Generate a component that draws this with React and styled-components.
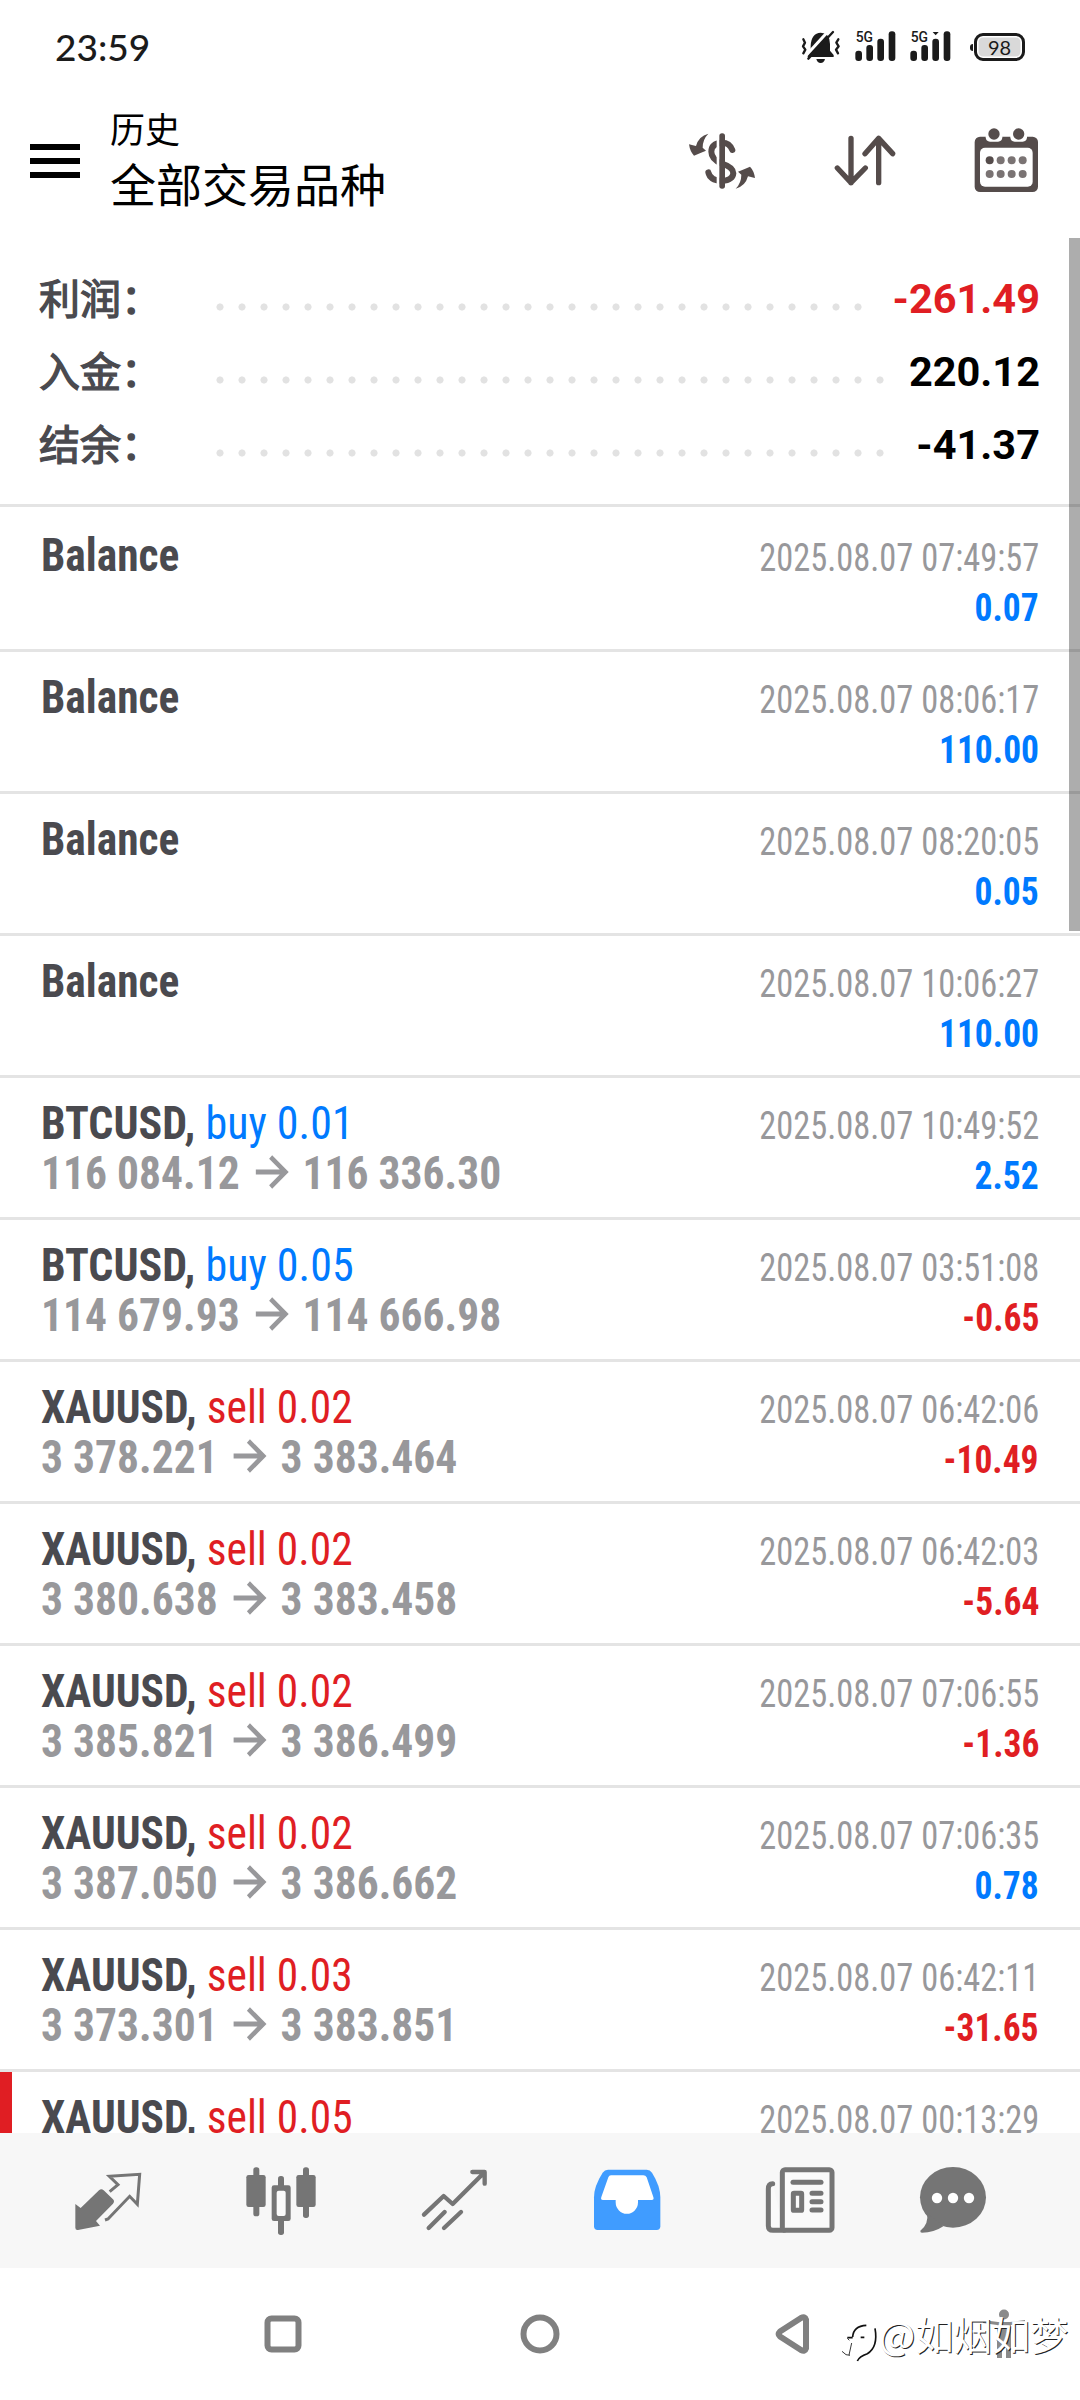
import styled, { createGlobalStyle } from 'styled-components';

const colors = {
  text: '#4a4a4f',
  grey: '#98989b',
  blue: '#007aff',
  red: '#e01e23',
  line: '#e4e4e4',
  header: '#554c4b',
  tab: '#757575',
};

const GlobalStyle = createGlobalStyle`
  * {
    box-sizing: border-box;
  }
  body {
    margin: 0;
    background: #fff;
    font-family: Roboto, 'Noto Sans CJK SC', sans-serif;
  }
  svg {
    display: block;
    flex: none;
    overflow: visible;
  }
`;

const Screen = styled.div`
  position: relative;
  display: flex;
  flex-direction: column;
  width: 1080px;
  height: 2400px;
  overflow: hidden;
  background: #fff;
`;

const StatusBar = styled.div`
  display: flex;
  align-items: center;
  justify-content: space-between;
  height: 84px;
  padding: 8px 55px 0 55px;
`;

const Clock = styled.span`
  font-family: Lato, sans-serif;
  font-size: 37px;
  font-weight: 500;
  color: #1b1b1b;
`;

const StatusIcons = styled.div`
  display: flex;
  align-items: center;
  gap: 14px;
  padding-top: 1px;
`;

const Battery = styled.div`
  position: relative;
  width: 51px;
  height: 28px;
  margin-left: 9px;
  border: 3px solid #1b1b1b;
  border-radius: 9px;
  box-shadow: inset 0 0 0 1.5px #fff;
  background: #d9d9d9;
  color: #1b1b1b;
  font-family: Lato, sans-serif;
  font-size: 20px;
  line-height: 22px;
  text-align: center;

  &::before {
    content: '';
    position: absolute;
    left: -7px;
    top: 8px;
    width: 3px;
    height: 7px;
    border-radius: 3px 0 0 3px;
    background: #1b1b1b;
  }
`;

const Header = styled.header`
  display: flex;
  align-items: center;
  height: 154px;
  padding: 0 41px 0 30px;
`;

const MenuButton = styled.div`
  display: flex;
  flex-direction: column;
  gap: 8px;
  width: 50px;

  span {
    height: 6px;
    background: #000;
  }
`;

const Titles = styled.div`
  flex: 1;
  margin: 0 0 12px 30px;
  color: #000;
  line-height: 54px;
  font-family: 'Noto Sans CJK SC', sans-serif;
`;

const Subtitle = styled.div`
  font-size: 35px;
`;

const Title = styled.div`
  font-size: 46px;
`;

const Actions = styled.div`
  display: flex;
  align-items: center;
  gap: 78px;
`;

const Content = styled.main`
  flex: 1;
  min-height: 0;
  overflow: hidden;
`;

const Summary = styled.section`
  height: 269px;
  padding: 23px 40px 0 39px;
  border-bottom: 3px solid ${colors.line};
`;

const SummaryRow = styled.div`
  display: flex;
  height: 73px;
`;

const SummaryLabel = styled.span`
  width: 170px;
  color: ${colors.text};
  font-family: 'Noto Sans CJK SC', sans-serif;
  font-size: 41px;
  line-height: 70px;
  -webkit-text-stroke: 1.3px ${colors.text};
`;

const Leader = styled.span`
  width: ${(p) => p.$dots * 22}px;
  height: 8px;
  margin-top: 42px;
  background: radial-gradient(circle, #e2e2e2 3.2px, transparent 3.9px) 0 0 / 22px 8px repeat-x;
`;

const SummaryValue = styled.span`
  margin-left: auto;
  color: ${(p) => (p.$negative ? colors.red : '#000')};
  font-size: 41.5px;
  font-weight: 700;
  line-height: 75px;
`;

const Deal = styled.article`
  position: relative;
  height: ${(p) => (p.$first ? 145 : 142)}px;
  padding: ${(p) => (p.$first ? 23 : 20)}px 41px 0;
  border-bottom: 3px solid ${colors.line};
  font-family: 'Roboto Condensed', Roboto, sans-serif;
  font-stretch: 75%;

  &::before {
    content: '';
    position: absolute;
    left: 0;
    top: 0;
    bottom: 0;
    width: ${(p) => (p.$marked ? 12 : 0)}px;
    background: ${colors.red};
  }
`;

const Line = styled.div`
  display: flex;
  align-items: baseline;
  height: 50px;
  font-size: 47px;
  line-height: 50px;
  white-space: pre;

  &::before {
    content: '\\200b';
  }
`;

// The condensed face is squeezed a little further than its own minimum width.
const narrow = { balance: 0.923, buy: 0.936, sell: 0.925 };

const Name = styled.span`
  color: ${colors.text};
  font-weight: 700;
  transform: scaleX(${(p) => narrow[p.$kind]});
  transform-origin: left;
`;

const Side = styled.span`
  color: ${(p) => (p.$side === 'sell' ? colors.red : colors.blue)};
  font-weight: 400;
`;

const Price = styled.span`
  display: flex;
  align-items: baseline;
  color: ${colors.grey};
  font-weight: 700;
  transform: scaleX(0.926);
  transform-origin: left;

  svg {
    margin: 2px 16px -2px 17px;
  }
`;

const Time = styled.span`
  margin-left: auto;
  color: ${colors.grey};
  font-size: 38px;
  transform: scaleX(0.905);
  transform-origin: right;
`;

const Profit = styled.span`
  margin-left: auto;
  color: ${(p) => (p.$negative ? colors.red : colors.blue)};
  font-size: 38px;
  font-weight: 700;
  transform: scaleX(0.935);
  transform-origin: right;
`;

const ScrollThumb = styled.div`
  position: absolute;
  right: 0;
  top: 238px;
  width: 11px;
  height: 693px;
  background: rgba(0, 0, 0, 0.32);
`;

const TabBar = styled.nav`
  display: grid;
  grid-template-columns: repeat(5, 172.9px) 134px;
  place-items: center;
  height: 135px;
  padding-left: 22px;
  background: #f7f7f7;
`;

const SystemNav = styled.div`
  display: grid;
  grid-template-columns: 260px 254px 251px 172px;
  place-items: center;
  height: 132px;
  padding-left: 153px;
`;

const Watermark = styled.div`
  position: absolute;
  left: 841px;
  top: 2306px;
  display: flex;
  align-items: center;
  height: 56px;
  color: #fff;
  font-family: 'Noto Sans CJK SC', sans-serif;
  font-size: 38.3px;
  line-height: 56px;
  text-shadow: 1px 1px 0 #222;
  white-space: nowrap;

  svg {
    margin-top: 20px;
  }
`;

const MutedBellIcon = () => (
  <svg width="40" height="34" viewBox="487 88 120 102" fill="#1b1b1b">
    <path d="M516 135Q518 97 546 96Q574 97 574 130V150L585 163V169H507V163L516 152Z" />
    <path d="M533 175H559Q556 187 546 187Q536 187 533 175Z" />
    <path d="M500 167L570 90" stroke="#fff" strokeWidth="9" />
    <path d="M509 174L583 94" stroke="#1b1b1b" strokeWidth="7" strokeLinecap="round" />
    <path
      d="M494 116L499 126L493 137L500 147L494 158M599 116L593 126L600 137L592 147L598 158"
      fill="none"
      stroke="#1b1b1b"
      strokeWidth="7"
      strokeLinecap="round"
      strokeLinejoin="round"
    />
  </svg>
);

const SignalIcon = ({ notch }) => (
  <svg width="41" height="34" viewBox="644 88 123 102" fill="#1b1b1b">
    <text x="646" y="125" fontFamily="Roboto" fontSize="45" fontWeight="500" textLength="52" lengthAdjust="spacingAndGlyphs">
      5G
    </text>
    <rect x="645" y="150" width="20" height="31" rx="9" />
    <rect x="678" y="133" width="20" height="48" rx="9" />
    <rect x="711" y="114" width="20" height="67" rx="9" />
    <rect x="745" y="92" width="20" height="89" rx="9" />
    {notch && <path d="M712 94H730L721 104Z" />}
  </svg>
);

const CurrencyIcon = () => (
  <svg width="68" height="58" viewBox="144 396 204 174" fill={colors.header}>
    <path
      d="M277 450Q269 428 246 428Q214 430 214 455Q214 478 246 491Q280 502 280 520Q278 541 246 543Q210 541 205 517"
      fill="none"
      stroke={colors.header}
      strokeWidth="18"
      strokeLinecap="round"
    />
    <rect x="230" y="410" width="9" height="150" fill="#fff" />
    <rect x="238" y="400" width="17" height="166" rx="8" />
    <path d="M205 401Q176 408 168 438L147 433Q150 455 162 467Q178 460 198 452L188 443Q188 418 205 401Z" />
    <path
      d="M205 401Q176 408 168 438L147 433Q150 455 162 467Q178 460 198 452L188 443Q188 418 205 401Z"
      transform="rotate(180 246 483.5)"
    />
  </svg>
);

const SortIcon = () => (
  <svg width="62" height="54" viewBox="582 402 186 162" fill="none" stroke={colors.header} strokeWidth="16" strokeLinecap="round" strokeLinejoin="round">
    <path d="M633 415V548M592 504L633 548L676 504" />
    <path d="M716 548V415M675 461L716 415L758 461" />
  </svg>
);

const CalendarIcon = () => (
  <svg width="65" height="66" viewBox="1003 382 195 198" fill={colors.header}>
    <rect x="1005" y="408" width="190" height="166" rx="16" />
    <rect x="1021" y="441" width="158" height="117" rx="15" fill="#fff" />
    {[1063, 1137].map((x) => (
      <g key={x}>
        <path d={`M${x - 25} 400H${x + 25}V410Q${x + 24} 423 ${x + 12} 423H${x - 12}Q${x - 24} 423 ${x - 25} 410Z`} fill="#fff" />
        <circle cx={x} cy="400" r="17" />
      </g>
    ))}
    {[479, 520].map((y) =>
      [1050, 1083, 1116, 1149].map((x) => (
        <circle key={`${x}-${y}`} cx={x} cy={y} r="12" fillOpacity={x === 1050 && y === 479 ? 1 : 0.78} />
      ))
    )}
  </svg>
);

const PriceArrow = () => (
  <svg width="35" height="34" viewBox="0 0 35 34" fill="none" stroke={colors.grey} strokeWidth="4.8">
    <path d="M0 17H32M16 2L32 17L16 32" />
  </svg>
);

const TabIcon = ({ x, children }) => (
  <svg width="70" height="70" viewBox={`${x} 135 210 210`} fill={colors.tab}>
    {children}
  </svg>
);

const QuotesIcon = () => (
  <TabIcon x={41}>
    <path d="M48 249L64 261L119 208Q126 202 133 208L161 235Q167 241 161 248L110 300L122 314L56 327Q48 328 48 320Z" />
    <path d="M151 212L176 191L150 166L241 160L234 250L211 226L146 294L137 297" fill="none" stroke={colors.tab} strokeWidth="9" />
  </TabIcon>
);

const ChartIcon = () => (
  <TabIcon x={558}>
    <rect x="559" y="162" width="58" height="96" rx="7" />
    <rect x="580" y="139" width="18" height="147" rx="8" />
    <rect x="709" y="162" width="58" height="96" rx="7" />
    <rect x="729" y="139" width="18" height="152" rx="8" />
    <rect x="654" y="165" width="18" height="177" rx="8" />
    <rect x="635" y="193" width="57" height="107" rx="7" />
    <rect x="650" y="209" width="27" height="76" rx="6" fill="#fafafa" />
  </TabIcon>
);

const TradeIcon = () => (
  <TabIcon x={1077}>
    <g fill="none" stroke={colors.tab} strokeWidth="13" strokeLinecap="round" strokeLinejoin="round">
      <path d="M1092 281L1151 225L1178 249L1272 155M1237 153H1274V188" />
      <path d="M1106 321L1154 273M1152 321L1203 273" />
    </g>
  </TabIcon>
);

const HistoryIcon = () => (
  <TabIcon x={67}>
    <path
      d="M115 146H231Q241 146 247 155Q272 195 272 229V316Q272 327 261 327H84Q73 327 73 316V229Q73 195 99 155Q105 146 115 146Z"
      fill="#409cff"
    />
    <path
      d="M124 163H221Q228 163 231 169L251 228Q254 237 246 237H205V244A33 34 0 0 1 138 244V237H100Q92 237 95 228L116 169Q118 163 124 163Z"
      fill="#fff"
    />
  </TabIcon>
);

const NewsIcon = () => (
  <TabIcon x={588}>
    <g fill="none" stroke={colors.tab} strokeWidth="15" strokeLinecap="round">
      <path d="M611 188Q598 188 598 204V314Q598 328 612 328H645" fill="#fafafa" />
      <rect x="640" y="146" width="149" height="182" rx="8" fill="#fafafa" />
      <path d="M672 184H756" />
      <rect x="673" y="217" width="25" height="51" rx="2" />
      <path d="M729 217H756M729 242H756M729 267H756" />
    </g>
  </TabIcon>
);

const ChatIcon = () => (
  <TabIcon x={1044}>
    <ellipse cx="1149" cy="229" rx="99" ry="91" />
    <path d="M1071 276Q1077 309 1051 329Q1050 335 1056 335Q1092 335 1120 316Z" />
    {[1101, 1149, 1197].map((x) => (
      <circle key={x} cx={x} cy="231" r="15.5" fill="#fff" />
    ))}
  </TabIcon>
);

const NavIcon = ({ children }) => (
  <svg width="44" height="50" viewBox="0 0 44 50" fill="none" stroke="#808080" strokeWidth="6" strokeLinejoin="round">
    {children}
  </svg>
);

const WatermarkLogo = () => (
  <svg width="38" height="42" viewBox="243 136 114 126" fill="none" stroke="#111" strokeWidth="5">
    <path d="M278 178Q280 145 319 143" />
    <path d="M345 152Q355 208 322 228Q298 236 292 250" />
    <path d="M262 180H278M302 179H313" />
    <path d="M246 221Q258 235 270 233M262 182L268 188M267 232L275 196" strokeWidth="2.5" />
  </svg>
);

const summary = [
  { label: '利润：', value: '-261.49', dots: 30, negative: true },
  { label: '入金：', value: '220.12', dots: 31 },
  { label: '结余：', value: '-41.37', dots: 31 },
];

const deals = [
  { symbol: 'Balance', time: '07:49:57', profit: '0.07' },
  { symbol: 'Balance', time: '08:06:17', profit: '110.00' },
  { symbol: 'Balance', time: '08:20:05', profit: '0.05' },
  { symbol: 'Balance', time: '10:06:27', profit: '110.00' },
  { symbol: 'BTCUSD', side: 'buy', lots: '0.01', open: '116 084.12', close: '116 336.30', time: '10:49:52', profit: '2.52' },
  { symbol: 'BTCUSD', side: 'buy', lots: '0.05', open: '114 679.93', close: '114 666.98', time: '03:51:08', profit: '-0.65' },
  { symbol: 'XAUUSD', side: 'sell', lots: '0.02', open: '3 378.221', close: '3 383.464', time: '06:42:06', profit: '-10.49' },
  { symbol: 'XAUUSD', side: 'sell', lots: '0.02', open: '3 380.638', close: '3 383.458', time: '06:42:03', profit: '-5.64' },
  { symbol: 'XAUUSD', side: 'sell', lots: '0.02', open: '3 385.821', close: '3 386.499', time: '07:06:55', profit: '-1.36' },
  { symbol: 'XAUUSD', side: 'sell', lots: '0.02', open: '3 387.050', close: '3 386.662', time: '07:06:35', profit: '0.78' },
  { symbol: 'XAUUSD', side: 'sell', lots: '0.03', open: '3 373.301', close: '3 383.851', time: '06:42:11', profit: '-31.65' },
  { symbol: 'XAUUSD', side: 'sell', lots: '0.05', time: '00:13:29', marked: true },
];

function DealRow({ deal, first }) {
  return (
    <Deal $first={first} $marked={deal.marked}>
      <Line>
        <Name $kind={deal.side || 'balance'}>
          {deal.symbol}
          {deal.side && (
            <>
              {', '}
              <Side $side={deal.side}>
                {deal.side} {deal.lots}
              </Side>
            </>
          )}
        </Name>
        <Time>2025.08.07 {deal.time}</Time>
      </Line>
      <Line>
        {deal.open && (
          <Price>
            {deal.open}
            <PriceArrow />
            {deal.close}
          </Price>
        )}
        {deal.profit && <Profit $negative={deal.profit.startsWith('-')}>{deal.profit}</Profit>}
      </Line>
    </Deal>
  );
}

function App() {
  return (
    <>
      <GlobalStyle />
      <Screen>
        <StatusBar>
          <Clock>23:59</Clock>
          <StatusIcons>
            <MutedBellIcon />
            <SignalIcon />
            <SignalIcon notch />
            <Battery>98</Battery>
          </StatusIcons>
        </StatusBar>

        <Header>
          <MenuButton>
            <span />
            <span />
            <span />
          </MenuButton>
          <Titles>
            <Subtitle>历史</Subtitle>
            <Title>全部交易品种</Title>
          </Titles>
          <Actions>
            <CurrencyIcon />
            <SortIcon />
            <CalendarIcon />
          </Actions>
        </Header>

        <Content>
          <Summary>
            {summary.map((row) => (
              <SummaryRow key={row.label}>
                <SummaryLabel>{row.label}</SummaryLabel>
                <Leader $dots={row.dots} />
                <SummaryValue $negative={row.negative}>{row.value}</SummaryValue>
              </SummaryRow>
            ))}
          </Summary>
          {deals.map((deal, i) => (
            <DealRow key={i} deal={deal} first={i === 0} />
          ))}
        </Content>

        <TabBar>
          <QuotesIcon />
          <ChartIcon />
          <TradeIcon />
          <HistoryIcon />
          <NewsIcon />
          <ChatIcon />
        </TabBar>

        <SystemNav>
          <NavIcon>
            <rect x="6.5" y="9.5" width="31" height="31" rx="4" />
          </NavIcon>
          <NavIcon>
            <circle cx="22" cy="25" r="16.5" />
          </NavIcon>
          <NavIcon>
            <path d="M35 10.5V39.5Q34 43 30 41L9 27.5Q6.5 25 9 22.5L30 9Q34 7 35 10.5Z" />
          </NavIcon>
          <NavIcon>
            <g fill="#8a8a8a" stroke="none">
              <circle cx="22" cy="5.5" r="5" />
              <path d="M1 11L16 13H28L43 11V14L29 16V49H24V34H20V49H15V16L1 14Z" />
            </g>
          </NavIcon>
        </SystemNav>

        <ScrollThumb />
        <Watermark>
          <WatermarkLogo />
          <span>@如烟如梦</span>
        </Watermark>
      </Screen>
    </>
  );
}

export default App;
